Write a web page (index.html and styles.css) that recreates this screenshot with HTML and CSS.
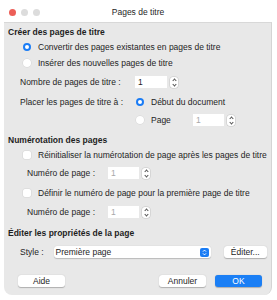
FILE: index.html
```html
<!DOCTYPE html>
<html lang="fr">
<head>
  <meta charset="UTF-8">
  <title>Pages de titre</title>
  <link rel="stylesheet" href="styles.css">
</head>
<body>
  <div class="window">
    <div class="titlebar">
      <div class="lights">
        <span class="light red"></span>
        <span class="light"></span>
        <span class="light"></span>
      </div>
      <div class="title">Pages de titre</div>
    </div>

    <div class="panel">
      <div class="section-title first">Créer des pages de titre</div>
      <div class="row indent">
        <span class="radio on"></span>
        <span>Convertir des pages existantes en pages de titre</span>
      </div>
      <div class="row indent">
        <span class="radio"></span>
        <span>Insérer des nouvelles pages de titre</span>
      </div>

      <div class="grid-place">
        <span class="lbl">Nombre de pages de titre :</span>
        <div class="row">
          <span class="field wide-field">1</span>
          <span class="spin"></span>
        </div>

        <span class="lbl">Placer les pages de titre à :</span>
        <div class="row">
          <span class="radio on"></span>
          <span>Début du document</span>
        </div>

        <span></span>
        <div class="row">
          <span class="radio"></span>
          <span class="page-word">Page</span>
          <span class="field dim">1</span>
          <span class="spin"></span>
        </div>
      </div>

      <div class="section-title">Numérotation des pages</div>
      <div class="row indent">
        <span class="check"></span>
        <span>Réinitialiser la numérotation de page après les pages de titre</span>
      </div>
      <div class="row sub">
        <span class="num-lbl">Numéro de page :</span>
        <span class="field dim">1</span>
        <span class="spin"></span>
      </div>
      <div class="row indent tall">
        <span class="check"></span>
        <span>Définir le numéro de page pour la première page de titre</span>
      </div>
      <div class="row sub last">
        <span class="num-lbl">Numéro de page :</span>
        <span class="field dim">1</span>
        <span class="spin"></span>
      </div>

      <div class="section-title">Éditer les propriétés de la page</div>
      <div class="row style-row">
        <span class="style-lbl">Style :</span>
        <div class="select">
          <span>Première page</span>
          <span class="select-btn">
            <svg width="5" height="7" viewBox="0 0 5 7"><path d="M1 2.6 L2.5 1.1 L4 2.6 M1 4.4 L2.5 5.9 L4 4.4" fill="none" stroke="#fff" stroke-width="1"/></svg>
          </span>
        </div>
        <span class="btn edit">Éditer...</span>
      </div>

      <div class="footer">
        <span class="btn wide">Aide</span>
        <span class="spacer"></span>
        <span class="btn wide">Annuler</span>
        <span class="btn wide primary">OK</span>
      </div>
    </div>
  </div>
</body>
</html>
```

FILE: styles.css
```css
body {
  margin: 0;
  background: #fff;
  font-family: 'Liberation Sans', Arial, sans-serif;
  font-size: 8.5px;
  color: #1e1e1e;
}

.window {
  margin: 0 5px 0 4px;
}

.titlebar {
  height: 22px;
  display: flex;
  align-items: center;
  position: relative;
  background: #fff;
}

.lights {
  display: flex;
  gap: 5px;
  padding-left: 5px;
  margin-top: 2px;
}

.light {
  width: 7px;
  height: 7px;
  border-radius: 50%;
  background: #dcdcdc;
}

.light.red {
  background: #ec5e57;
}

.title {
  position: absolute;
  left: 0;
  right: 0;
  top: 7px;
  text-align: center;
  color: #262626;
}

.panel {
  background: #e8e8e8;
  border-top: 1px solid #d8d8d8;
  border-right: 1px solid #d4d4d4;
  border-radius: 0 0 8px 8px;
  padding: 2px 4px 0 4px;
  height: 273px;
  box-sizing: border-box;
  white-space: nowrap;
}

.section-title {
  font-weight: bold;
  height: 14px;
  line-height: 14px;
  margin-top: 5px;
}

.section-title.first {
  margin-top: 0;
}

.row {
  display: flex;
  align-items: center;
  height: 16px;
}

.indent {
  padding-left: 15px;
}

.row.tall {
  height: 20px;
}

.radio {
  width: 8px;
  height: 8px;
  border-radius: 50%;
  background: #fff;
  box-shadow: 0 0 0 0.5px #d4d4d4;
  margin-right: 7px;
  flex: none;
  box-sizing: border-box;
}

.radio.on {
  border: 2.5px solid #1a7cf5;
  box-shadow: none;
}

.check {
  width: 8px;
  height: 8px;
  border-radius: 2px;
  background: #fff;
  box-shadow: 0 0 0 0.5px #d4d4d4;
  margin-right: 7px;
  flex: none;
}

.grid-place {
  display: grid;
  grid-template-columns: 115px 1fr;
  grid-template-rows: 20px 20px 16px;
  align-items: center;
  padding-left: 12px;
  margin-top: 1px;
}

.field {
  width: 31px;
  height: 12px;
  line-height: 12px;
  background: #fff;
  padding-left: 3px;
  box-sizing: border-box;
  color: #1e1e1e;
}

.field.wide-field {
  width: 32px;
}

.field.dim {
  color: #a8a8a8;
}

.spin {
  width: 8px;
  height: 11px;
  margin-left: 3px;
  border-radius: 3px;
  background: #fff;
  box-shadow: 0 0 0 0.5px #c4c4c4;
  position: relative;
  box-sizing: border-box;
}

.spin::before,
.spin::after {
  content: "";
  position: absolute;
  left: 3px;
  width: 2px;
  height: 2px;
  border-left: 1px solid #555;
  border-top: 1px solid #555;
}

.spin::before {
  top: 2px;
  transform: rotate(45deg);
}

.spin::after {
  bottom: 2px;
  transform: rotate(-135deg);
}

.grid-place .radio {
  margin-left: 1px;
}

.page-word {
  width: 42px;
}

.sub {
  padding-left: 19px;
  height: 20px;
}

.sub.last {
  height: 18px;
}

.num-lbl {
  width: 81px;
}

.style-row {
  padding-left: 12px;
  height: 20px;
  margin-top: 2px;
}

.style-lbl {
  width: 34px;
}

.select {
  display: flex;
  align-items: center;
  justify-content: space-between;
  width: 159px;
  height: 12px;
  background: #fff;
  border-radius: 3px;
  box-shadow: 0 0.5px 1px rgba(0, 0, 0, 0.2);
  padding: 0 2px 0 2px;
  box-sizing: border-box;
}

.select-btn {
  width: 9px;
  height: 9px;
  border-radius: 2px;
  background: #1a7cf5;
  display: flex;
  align-items: center;
  justify-content: center;
}

.btn {
  background: #fff;
  border-radius: 3px;
  box-shadow: 0 0.5px 1px rgba(0, 0, 0, 0.25);
  height: 12px;
  line-height: 12px;
  text-align: center;
}

.btn.edit {
  width: 44px;
  margin-left: 13px;
}

.footer {
  display: flex;
  align-items: center;
  height: 14px;
  margin-top: 12px;
  padding: 0 5px 0 10px;
}

.spacer {
  flex: 1;
}

.btn.wide {
  width: 47px;
}

.btn.wide + .btn.wide {
  margin-left: 9px;
}

.btn.primary {
  background: #1b7ff5;
  color: #fff;
}
```
